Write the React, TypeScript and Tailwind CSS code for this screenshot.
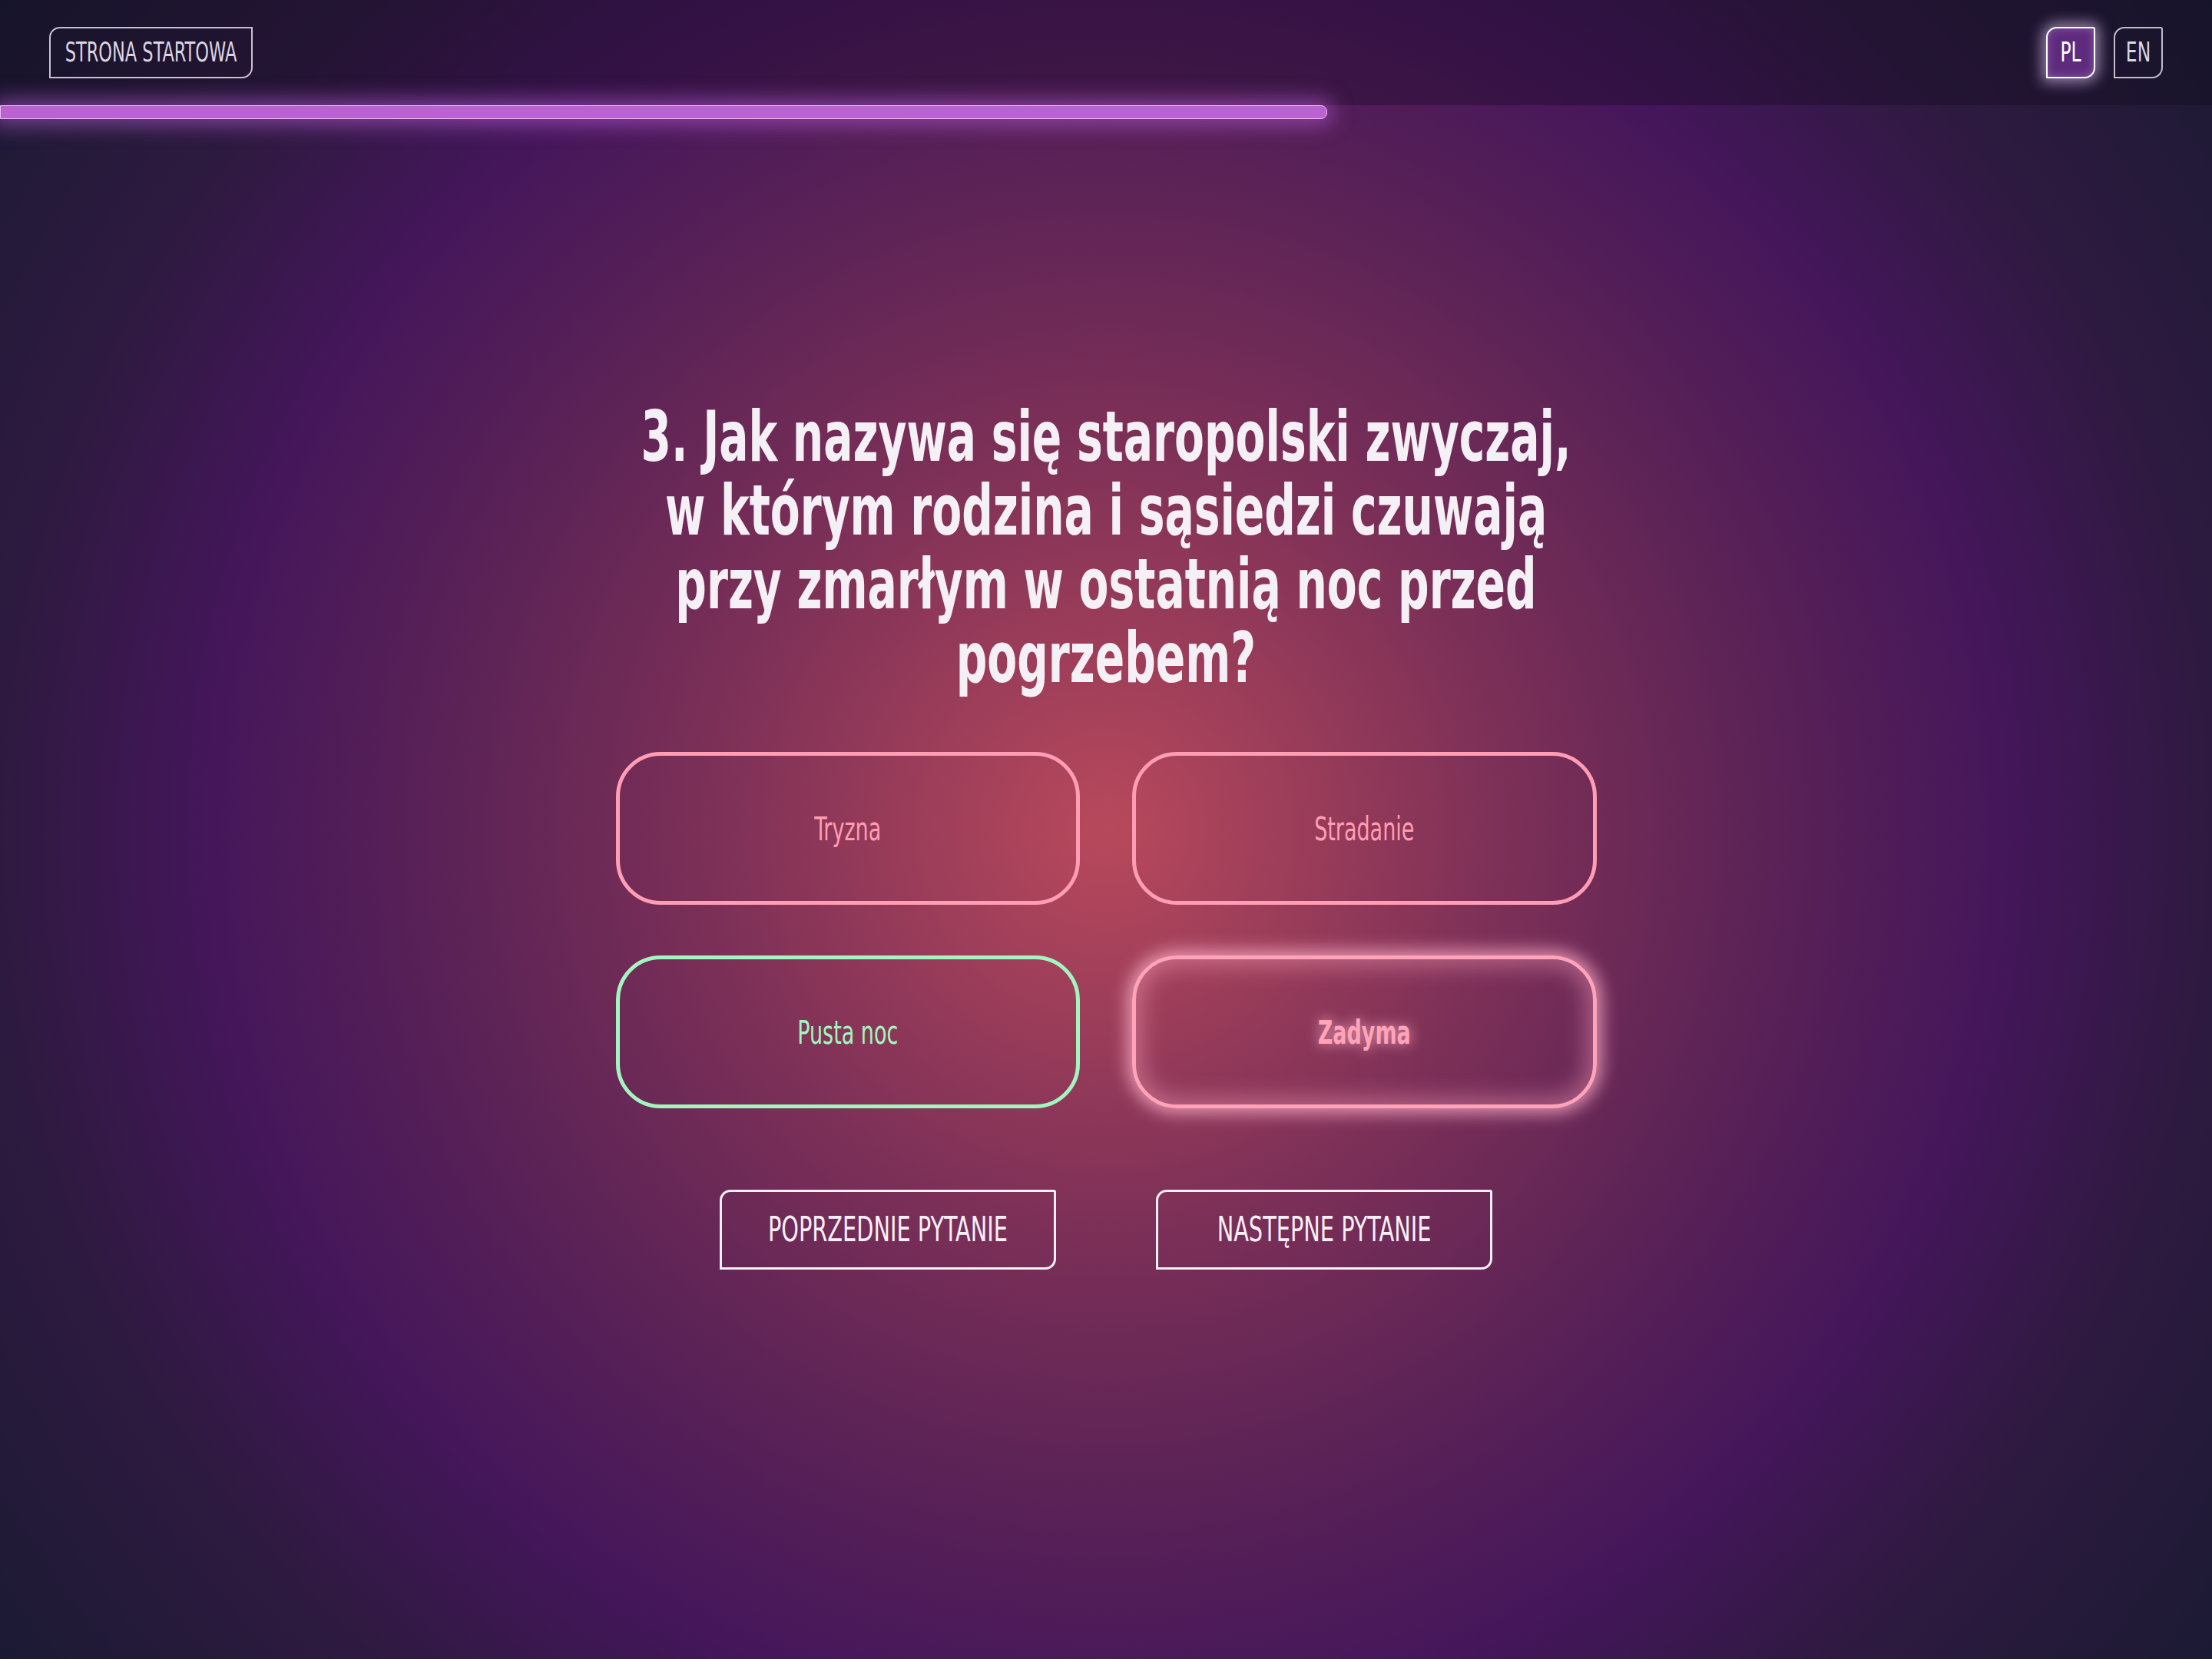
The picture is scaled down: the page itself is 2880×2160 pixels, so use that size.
import { useState } from "react";

const ANSWERS = [
  { id: "a", label: "Tryzna", state: "idle" },
  { id: "b", label: "Stradanie", state: "idle" },
  { id: "c", label: "Pusta noc", state: "correct" },
  { id: "d", label: "Zadyma", state: "picked" },
];

const CARD_STYLES: Record<string, string> = {
  idle: "border-[#ff9db4] text-[#ff9db4] text-[30px]",
  correct: "border-[#a3f5c0] text-[#a3f5c0] text-[30px]",
  picked:
    "border-[#ffa3b9] text-[#ffa3b9] text-[30px] font-bold shadow-[0_0_22px_6px_rgba(255,175,200,0.8),inset_0_0_30px_8px_rgba(255,165,190,0.45)] [text-shadow:0_0_14px_rgba(255,180,200,0.9)]",
};

const QUESTION = [
  "3. Jak nazywa się staropolski zwyczaj,",
  "w którym rodzina i sąsiedzi czuwają",
  "przy zmarłym w ostatnią noc przed",
  "pogrzebem?",
];

export default function App() {
  const [lang, setLang] = useState("PL");

  return (
    <div className="min-h-screen w-full bg-[radial-gradient(circle_at_50%_50%,#b8495c_0%,#7a2f57_30%,#5c2356_47%,#44165a_65%,#2e1a40_80%,#1b1a33_100%)] font-['DejaVu_Sans_Condensed','DejaVu_Sans',sans-serif] text-white">
      <header className="flex h-[137px] items-center justify-between bg-[#0d0818]/30 pl-[64px] pr-[64px]">
        <button className="flex h-[67px] w-[265px] items-center justify-center rounded-tl-[14px] rounded-br-[14px] border-2 border-[#cbc0d3] text-[25px] text-[#dcd3e0]">
          <span className="scale-y-[1.42]">STRONA STARTOWA</span>
        </button>
        <div className="flex gap-[24px]">
          {["PL", "EN"].map(l => (
            <button
              key={l}
              onClick={() => setLang(l)}
              className={`flex h-[67px] w-[64px] items-center justify-center rounded-tl-[14px] rounded-tr-[3px] rounded-br-[14px] border-2 text-[26px] ${
                lang === l
                  ? "border-white bg-[#5e2a7e] text-white shadow-[0_0_18px_5px_rgba(235,205,255,0.6),inset_0_0_12px_rgba(255,255,255,0.25)]"
                  : "border-[#c4bccb] text-[#dcd6e0]"
              }`}
            >
              <span className="scale-y-[1.38]">{l}</span>
            </button>
          ))}
        </div>
      </header>

      <div className="h-[18px] w-3/5 rounded-r-[8px] border border-[#e8bdf0] bg-[#bb62d2] shadow-[0_0_26px_8px_rgba(190,95,220,0.55)]" />

      <main className="flex flex-col items-center pt-[367px] pb-[200px]">
        <h1 className="text-center text-[63px] font-bold leading-[96px] text-[#f5f0f5]">
          {QUESTION.map(line => (
            <span key={line} className="block scale-y-[1.45]">
              {line}
            </span>
          ))}
        </h1>

        <div className="mt-[73px] grid w-[1277px] grid-cols-2 gap-x-[68px] gap-y-[66px]">
          {ANSWERS.map(a => (
            <button
              key={a.id}
              className={`flex h-[199px] items-center justify-center rounded-[58px] border-[5px] ${CARD_STYLES[a.state]}`}
            >
              <span className="scale-y-[1.44]">{a.label}</span>
            </button>
          ))}
        </div>

        <nav className="mt-[106px] flex gap-[130px]">
          {["POPRZEDNIE PYTANIE", "NASTĘPNE PYTANIE"].map(t => (
            <button
              key={t}
              className="flex h-[104px] w-[438px] items-center justify-center rounded-tl-[14px] rounded-tr-[3px] rounded-br-[14px] border-[3px] border-[#f6f0f6] text-[32px] text-[#f6f0f6]"
            >
              <span className="scale-y-[1.38]">{t}</span>
            </button>
          ))}
        </nav>
      </main>
    </div>
  );
}
